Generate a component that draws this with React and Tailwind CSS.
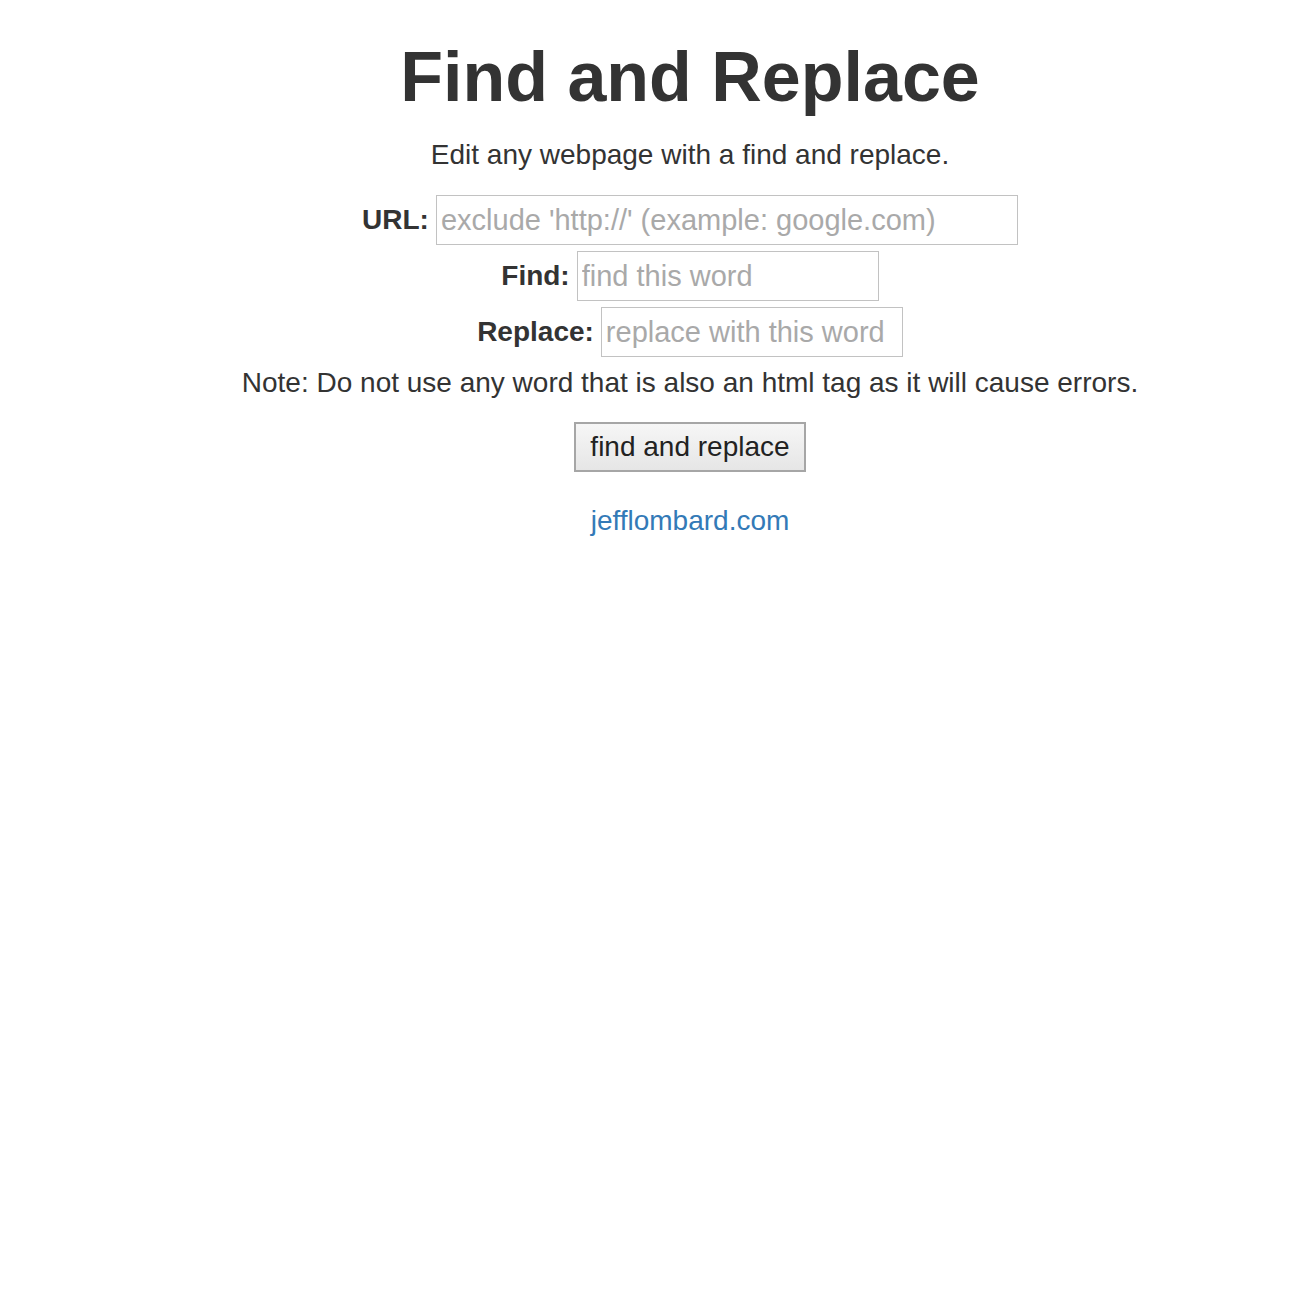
import React from "react";

export default function App() {
    const rows = [
        { label: "URL:", placeholder: "exclude 'http://' (example: google.com)", width: "w-[582px]" },
        { label: "Find:", placeholder: "find this word", width: "w-[302px]" },
        { label: "Replace:", placeholder: "replace with this word", width: "w-[302px]" },
    ];

    return (
        <div
            className="min-h-[1310px] bg-white pl-[70px] text-[#333] flex flex-col items-center"
            style={{ fontFamily: "'Liberation Sans', Arial, sans-serif" }}
        >
            <h1 className="mt-[33px] text-[70px] leading-[88px] font-bold">Find and Replace</h1>
            <p className="mt-[16px] text-[28px] leading-[36px]">
                Edit any webpage with a find and replace.
            </p>

            <div className="mt-[22px] flex flex-col items-center gap-[6px]">
                {rows.map((row) => (
                    <div key={row.label} className="flex items-center gap-[7px]">
                        <label className="text-[28px] font-bold">{row.label}</label>
                        <input
                            type="text"
                            placeholder={row.placeholder}
                            className={`${row.width} h-[50px] border border-[#c2c2c2] px-[4px] text-[29px] placeholder:text-[#a9a9a9] outline-none`}
                        />
                    </div>
                ))}
            </div>

            <p className="mt-[6px] text-[28px] leading-[40px]">
                Note: Do not use any word that is also an html tag as it will cause errors.
            </p>

            <button className="mt-[19px] h-[50px] w-[232px] border-2 border-[#a6a6a6] bg-gradient-to-b from-[#f6f6f6] to-[#e6e6e6] text-[28px] text-[#222]">
                find and replace
            </button>

            <a href="#" className="mt-[33px] text-[28px] leading-[32px] text-[#337ab7]">
                jefflombard.com
            </a>
        </div>
    );
}
